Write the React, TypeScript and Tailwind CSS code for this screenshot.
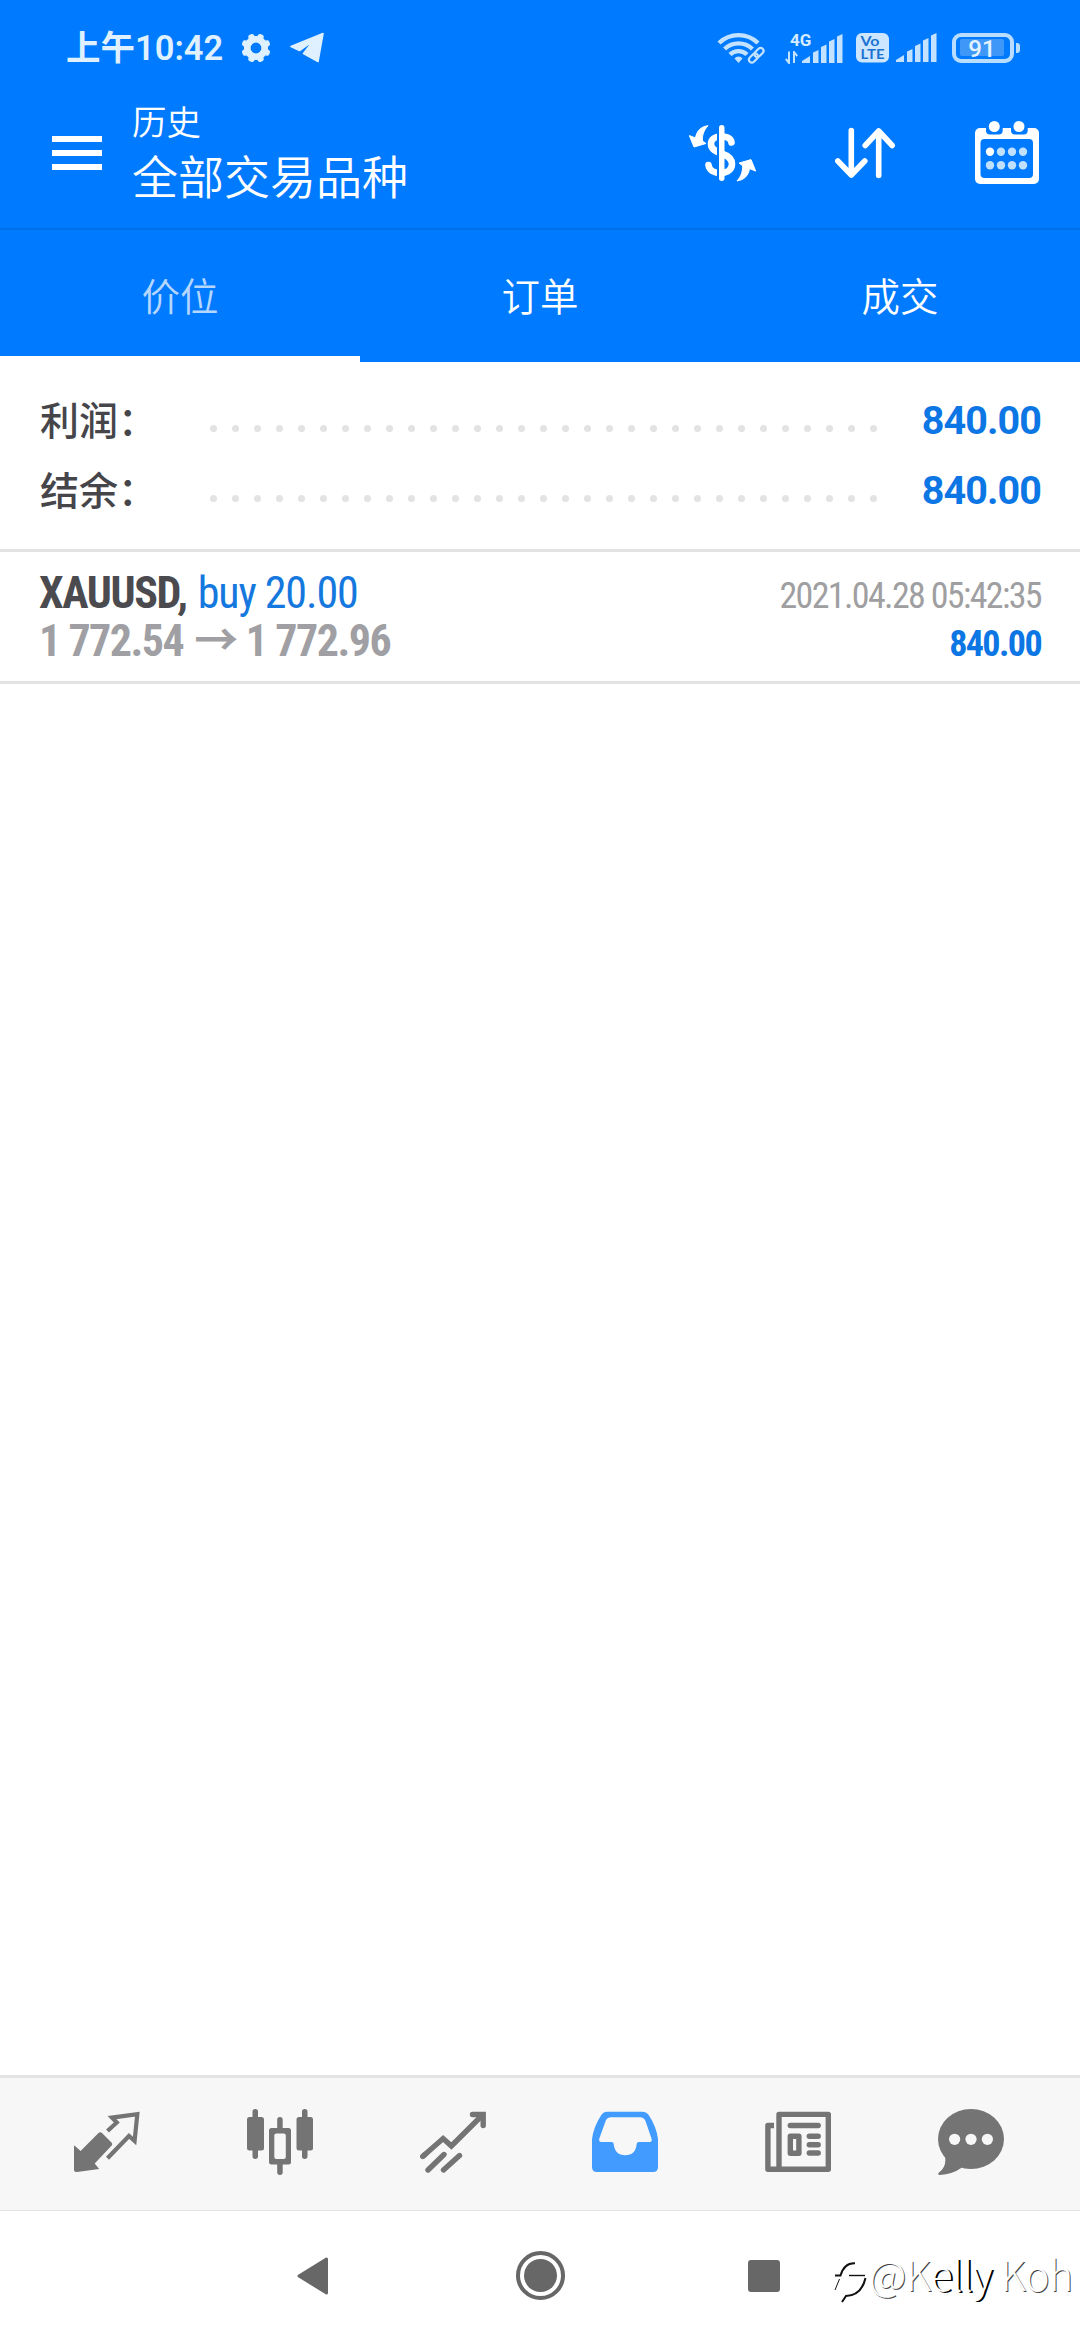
import React from 'react';

interface Trade {
  symbol: string;
  side: string;
  open: string;
  close: string;
  time: string;
  profit: string;
}

const TABS = ['价位', '订单', '成交'];

const SUMMARY = [
  { label: '利润：', value: '840.00' },
  { label: '结余：', value: '840.00' },
];

const TRADES: Trade[] = [
  {
    symbol: 'XAUUSD,',
    side: 'buy 20.00',
    open: '1 772.54',
    close: '1 772.96',
    time: '2021.04.28 05:42:35',
    profit: '840.00',
  },
];

function SignalBars() {
  return (
    <svg width="41" height="30" viewBox="0 0 41 30" fill="#c3e2ff">
      <path d="M0 29V27L8 22V29Z" />
      <path d="M11 29V18.5L16.5 16V29Z" />
      <path d="M19 29V13L24.5 10.5V29Z" />
      <path d="M27 29V7.5L32.5 5V29Z" />
      <path d="M35 29V2.5L40.5 0V29Z" />
    </svg>
  );
}

function StatusBar() {
  return (
    <div className="flex h-[95px] items-center pl-[66px] pr-[60px]">
      <span className="text-[34.5px] leading-[40px] font-semibold text-[#dff0ff]">上午10:42</span>
      <svg className="ml-[18px]" width="30" height="30" viewBox="-15 -15 30 30" stroke="#dff0ff" fill="none">
        <circle r="8.7" strokeWidth="6.6" />
        {[0, 45, 90, 135, 180, 225, 270, 315].map((a) => (
          <path key={a} d="M-1.6 -11.4L-1.2 -12.9H1.2L1.6 -11.4Z" strokeWidth="3.4" strokeLinejoin="round" transform={`rotate(${a + 22.5})`} />
        ))}
      </svg>
      <svg className="ml-[19px]" width="35" height="31" viewBox="0 0 35 31">
        <path
          d="M1 14.5L33 1.5L28 29.5L13.5 21.5L23.5 8.5L9.5 18.5Z"
          fill="#dff0ff"
          stroke="#dff0ff"
          strokeWidth="1.6"
          strokeLinejoin="round"
        />
      </svg>

      {/* Right side: wifi, two SIMs, battery */}
      <svg className="ml-auto" width="48" height="32" viewBox="0 0 48 32" fill="none" stroke="#c3e2ff" strokeWidth="4.4">
        <path d="M2 11A28 28 0 0 1 41 11" />
        <path d="M7.6 17A20 20 0 0 1 35.4 17" />
        <path d="M13 22.5A12.5 12.5 0 0 1 30 22.5" />
        <path d="M17.5 26.5A5 5 0 0 1 25.5 26.5L21.5 31Z" fill="#c3e2ff" stroke="none" />
        <g strokeWidth="2.2">
          <rect x="-5.2" y="-2.9" width="10.4" height="5.8" rx="2.9" transform="translate(36.5 26) rotate(-45)" />
          <rect x="-5.2" y="-2.9" width="10.4" height="5.8" rx="2.9" transform="translate(42 20.5) rotate(-45)" />
        </g>
      </svg>
      <div className="ml-5 flex h-8 items-end">
        <div className="flex w-[17px] flex-col">
          <span className="pl-[5px] text-[17px] leading-[17px] font-bold whitespace-nowrap text-[#d6ecff]">4G</span>
          <svg className="mt-[2px]" width="14" height="13" viewBox="0 0 14 13" fill="none" stroke="#c3e2ff" strokeWidth="2">
            <path d="M4 0.5V12L0.8 7.8" />
            <path d="M9 12V1L12.2 5.2" />
          </svg>
        </div>
        <SignalBars />
      </div>
      <svg className="ml-[13px]" width="33" height="30" viewBox="0 0 33 30" fontFamily="Lato, sans-serif" fontWeight="700">
        <rect width="33" height="29.5" rx="6" fill="#cde6ff" />
        <text x="4.5" y="12.5" fontSize="13" textLength="19" lengthAdjust="spacingAndGlyphs" fill="#1a72d2">
          Vo
        </text>
        <text x="4.5" y="26.3" fontSize="13" textLength="24" lengthAdjust="spacingAndGlyphs" fill="#1a72d2">
          LTE
        </text>
      </svg>
      <div className="ml-[7px]">
        <SignalBars />
      </div>
      <div className="ml-[15px] flex h-[30px] w-[62px] items-center justify-center rounded-[9px] border-4 border-[#b9ddff]">
        <div className="mr-[2px] flex h-[17px] w-[44px] items-center justify-center rounded-[2px] bg-[#3f98f8] pt-[3px] text-[24px] font-medium leading-none text-[#e2f2ff]">
          91
        </div>
      </div>
      <div className="ml-[2px] h-[10px] w-1 rounded-r-[3px] bg-[#b9ddff]" />
    </div>
  );
}

function Toolbar() {
  return (
    <div className="flex h-[133px] items-center pb-[17px] pl-[52px] pr-[41px]">
      <div className="flex w-[50px] flex-col gap-2">
        <div className="h-[6px] bg-white" />
        <div className="h-[6px] bg-white" />
        <div className="h-[6px] bg-white" />
      </div>
      <div className="ml-[30px] self-start pt-[3px] font-[350] text-white">
        <div className="text-[34.5px] leading-[50px]">历史</div>
        <div className="text-[46px] leading-[60px]">全部交易品种</div>
      </div>
      <svg className="ml-auto" width="67" height="57" viewBox="0 0 67 57">
        <path
          d="M42.5 17.5C42 13.5 38 11.5 32 11.5C25 11.5 22 15 22 19C22 24.5 27 26.5 32.5 28.5C40 31 43 34.5 43 39C43 44 39 48 32 48C25 48 20 45 19.5 40"
          fill="none"
          stroke="#fff"
          strokeWidth="6.6"
          strokeLinecap="round"
        />
        <rect x="28" y="3" width="3" height="50" fill="#007aff" />
        <rect x="30" y="0" width="5.5" height="56" rx="2.7" fill="#fff" />
        <path id="curl" d="M19 0.7C12 1.5 7.5 6 6.5 13L0.3 10.5L5 22L17 18.5L13.5 16C13 10 15 5 19 0.7Z" fill="#fff" stroke="#fff" strokeLinejoin="round" />
        <use href="#curl" transform="rotate(180 33.5 28.3)" />
      </svg>
      <svg className="ml-[79px]" width="60" height="52" viewBox="0 0 60 52" fill="none" stroke="#fff" strokeWidth="5.6" strokeLinecap="round" strokeLinejoin="round">
        <path d="M16.3 3.5V48M2.8 34L16.3 48L29.8 34" />
        <path d="M43.7 48.5V4M30.2 18.5L43.7 4L57.2 18.5" />
      </svg>
      <svg className="ml-[80px]" width="64" height="65" viewBox="0 1 64 65">
        <rect y="8" width="64" height="56" rx="5" fill="#fff" />
        <rect x="5.5" y="19" width="52.5" height="39" rx="4" fill="#007aff" />
        <rect x="11" y="4" width="16.7" height="10.5" rx="4" fill="#007aff" />
        <rect x="36" y="4" width="16.7" height="10.5" rx="4" fill="#007aff" />
        <circle cx="19.3" cy="6.5" r="5.5" fill="#fff" />
        <circle cx="44" cy="6.5" r="5.5" fill="#fff" />
        {[31.7, 45.3].map((y) =>
          [15, 26, 37, 48].map((x) => (
            <circle key={`${x}-${y}`} cx={x} cy={y} r="4.2" fill={x === 15 && y < 40 ? '#fff' : '#bfe0ff'} />
          ))
        )}
      </svg>
    </div>
  );
}

function SummaryRow({ label, value }: { label: string; value: string }) {
  return (
    <div className="flex h-[70px] items-center">
      <span className="w-[170px] pt-[7px] text-[39px] leading-[60px] font-medium text-[#45454a]">{label}</span>
      <div className="flex w-[667px] justify-between pt-[21px]">
        {Array.from({ length: 31 }, (_, i) => (
          <span key={i} className="size-[7px] rounded-full bg-[#e3e3e3]" />
        ))}
      </div>
      <span className="ml-auto pt-[6px] text-[39.5px] leading-[50px] font-bold tracking-[-0.9px] text-[#0c76e4]">{value}</span>
    </div>
  );
}

function TradeRow({ trade }: { trade: Trade }) {
  return (
    <div className="border-b-[3px] border-[#e3e3e3] pt-[17px] pr-[39px] pb-4 pl-[39px] font-['Roboto_Condensed','Noto_Sans_CJK_SC',sans-serif]">
      <div className="flex h-12 items-baseline text-[44px] leading-[48px]">
        <span className="font-bold tracking-[-1.4px] text-[#4a4a4f]">{trade.symbol}</span>
        <span className="ml-[11px] tracking-[-1.1px] text-[#1478de]">{trade.side}</span>
        <span className="ml-auto text-[36px] tracking-[-1.65px] text-[#9f9fa2]">{trade.time}</span>
      </div>
      <div className="flex h-12 items-baseline text-[44px] leading-[48px] font-bold tracking-[-1.5px] text-[#9f9fa4]">
        <span>{trade.open}</span>
        <span className="mr-[9px] ml-[11px] font-['Noto_Sans_CJK_SC'] leading-[36px]">→</span>
        <span>{trade.close}</span>
        <span className="ml-auto text-[36px] tracking-[-1.6px] text-[#0c76e4]">{trade.profit}</span>
      </div>
    </div>
  );
}

function BottomTabs() {
  const icons = [
    // Quotes
    <svg key="quotes" width="66" height="66" viewBox="0 0 66 66" fill="#747474">
      <path d="M0 37Q0 36 1 37L6.6 42L24.5 24Q26 22.5 28 24L37.5 33.5Q39 35 37.7 36.5L20.7 54.5L25.2 60L3 63Q0 63.5 0 61Z" />
      <path d="M33.5 22L42.8 13.5L38 8.6L63.3 5.2L60.6 32L55 27L33.5 49.3" fill="none" stroke="#747474" strokeWidth="4.2" />
    </svg>,
    // Charts
    <svg key="charts" width="66" height="66" viewBox="0 0 66 66" fill="#747474">
      <rect x="5.5" width="5.5" height="50" rx="2.7" />
      <rect y="8" width="17" height="33.5" rx="2.5" />
      <rect x="55" width="5.5" height="50" rx="2.7" />
      <rect x="49.5" y="8" width="16.5" height="33.5" rx="2.5" />
      <rect x="30.2" y="8" width="5.5" height="58" rx="2.7" />
      <rect x="22" y="19" width="22" height="36.5" rx="2.5" />
      <rect x="27.3" y="24.5" width="11.5" height="25.5" rx="2" fill="#f7f7f7" />
    </svg>,
    // Trade
    <svg key="trade" width="66" height="66" viewBox="0 0 66 66" fill="none" stroke="#747474" strokeWidth="5.4" strokeLinecap="round">
      <path d="M2.7 47.5L23.1 29.5L31.4 37L62.5 6" strokeLinecap="butt" />
      <path d="M2.7 47.5L5 45.5M52.5 5.5H63.2V16.5" />
      <path d="M8 61L24 45.5M23.5 61L39.5 46.5" />
    </svg>,
    // History
    <svg key="history" width="66" height="66" viewBox="0 0 66 66">
      <path
        d="M18 2.7H50Q55 2.7 57 6.5Q64.5 18 66 30V58Q66 63 61 63H5Q0 63 0 58V30Q1.5 18 9 6.5Q11 2.7 15 2.7ZM18.5 8.2Q15.5 8.2 14 11L7.3 29.5Q6.5 33 9.5 33H19.5Q21.7 33 21.7 35Q23 46.3 33.2 46.3Q43.5 46.3 44.7 35Q44.7 33 47 33H57.5Q60.5 33 59.5 29.5L53.5 12Q52 8.2 48 8.2Z"
        fill="#429bff"
        fillRule="evenodd"
      />
    </svg>,
    // News
    <svg key="news" width="66" height="66" viewBox="0 0 66 66" fill="none" stroke="#747474" strokeWidth="5.4" strokeLinejoin="round">
      <path d="M14 5.4H63.3V60.3H14Z" />
      <path d="M9 16.5H2.9V60.3H14" />
      <path d="M25.3 16.5H53.2M44.3 27.3H53.2M44.3 35.7H53.2M44.3 44H53.2" strokeLinecap="round" />
      <rect x="25.3" y="27.3" width="8.6" height="17" />
    </svg>,
    // Mailbox
    <svg key="mail" width="66" height="66" viewBox="0 0 66 66" fill="#747474">
      <ellipse cx="33" cy="30" rx="33" ry="30" />
      <path d="M7 47Q9 58 0.5 64Q-0.5 66 2 66Q14 65.5 24 58.5Z" />
      <circle cx="16.6" cy="30.3" r="5.6" fill="#f7f7f7" />
      <circle cx="33" cy="30.3" r="5.6" fill="#f7f7f7" />
      <circle cx="49.4" cy="30.3" r="5.6" fill="#f7f7f7" />
    </svg>,
  ];

  return (
    <div className="flex h-[136px] border-t-[3px] border-b border-[#e3e3e3] bg-[#f7f7f7] pt-[31px] pr-[23px] pl-[21px]">
      {icons.map((icon, i) => (
        <div key={i} className="flex flex-1 justify-center">
          {icon}
        </div>
      ))}
    </div>
  );
}

function SystemNav() {
  return (
    <div className="flex h-[129px] items-center overflow-hidden bg-white pl-[297px]">
      <svg width="31" height="38" viewBox="0 0 31 38">
        <path d="M2 19L29.5 2V36Z" fill="#676767" stroke="#676767" strokeWidth="3" strokeLinejoin="round" />
      </svg>
      <div className="ml-[188px] flex size-[49px] items-center justify-center rounded-full border-4 border-[#676767]">
        <div className="size-[33px] rounded-full bg-[#676767]" />
      </div>
      <div className="ml-[183px] size-8 rounded-[3px] bg-[#676767]" />
      <svg className="mt-[14px] ml-[52px]" width="36" height="44" viewBox="0 0 36 44" fill="none" stroke="#111" strokeWidth="2">
        <path d="M3 14.5H8.5C11 6 16 1.8 23 2.2" />
        <path d="M17 14.5H33" strokeWidth="1.4" />
        <path d="M33.5 17C31 28 25 34.5 14 35L10 41" />
        <path d="M3 29L7.5 18" strokeWidth="1" />
      </svg>
      <span className="mb-[5px] ml-[1px] font-['Noto_Sans_CJK_SC',sans-serif] text-[41px] leading-[50px] font-light whitespace-nowrap tracking-[-0.6px] text-white [text-shadow:1px_1px_0_#444]">
        @K<span className="[text-shadow:2px_1px_0_#000]">elly</span> Koh
      </span>
    </div>
  );
}

export default function App() {
  return (
    <div className="flex h-[2340px] w-[1080px] flex-col bg-white font-[Roboto,'Noto_Sans_CJK_SC',sans-serif]">
      <div className="bg-[#007aff]">
        <StatusBar />
        <Toolbar />
        <div className="grid grid-cols-3 border-t-2 border-[#0070ea]">
          {TABS.map((tab, i) => (
            <div
              key={tab}
              className={`flex h-[132px] items-center justify-center border-b-[6px] pt-[10px] text-[38.5px] font-[350] ${
                i === 0 ? 'border-white text-[#b5d7ff]' : 'border-[#007aff] text-white'
              }`}
            >
              {tab}
            </div>
          ))}
        </div>
      </div>

      <div className="h-[190px] border-b-[3px] border-[#e3e3e3] pt-[21px] pr-[39px] pl-10">
        {SUMMARY.map((row) => (
          <SummaryRow key={row.label} label={row.label} value={row.value} />
        ))}
      </div>

      <div className="flex-1">
        {TRADES.map((trade) => (
          <TradeRow key={trade.time} trade={trade} />
        ))}
      </div>

      <BottomTabs />
      <SystemNav />
    </div>
  );
}
